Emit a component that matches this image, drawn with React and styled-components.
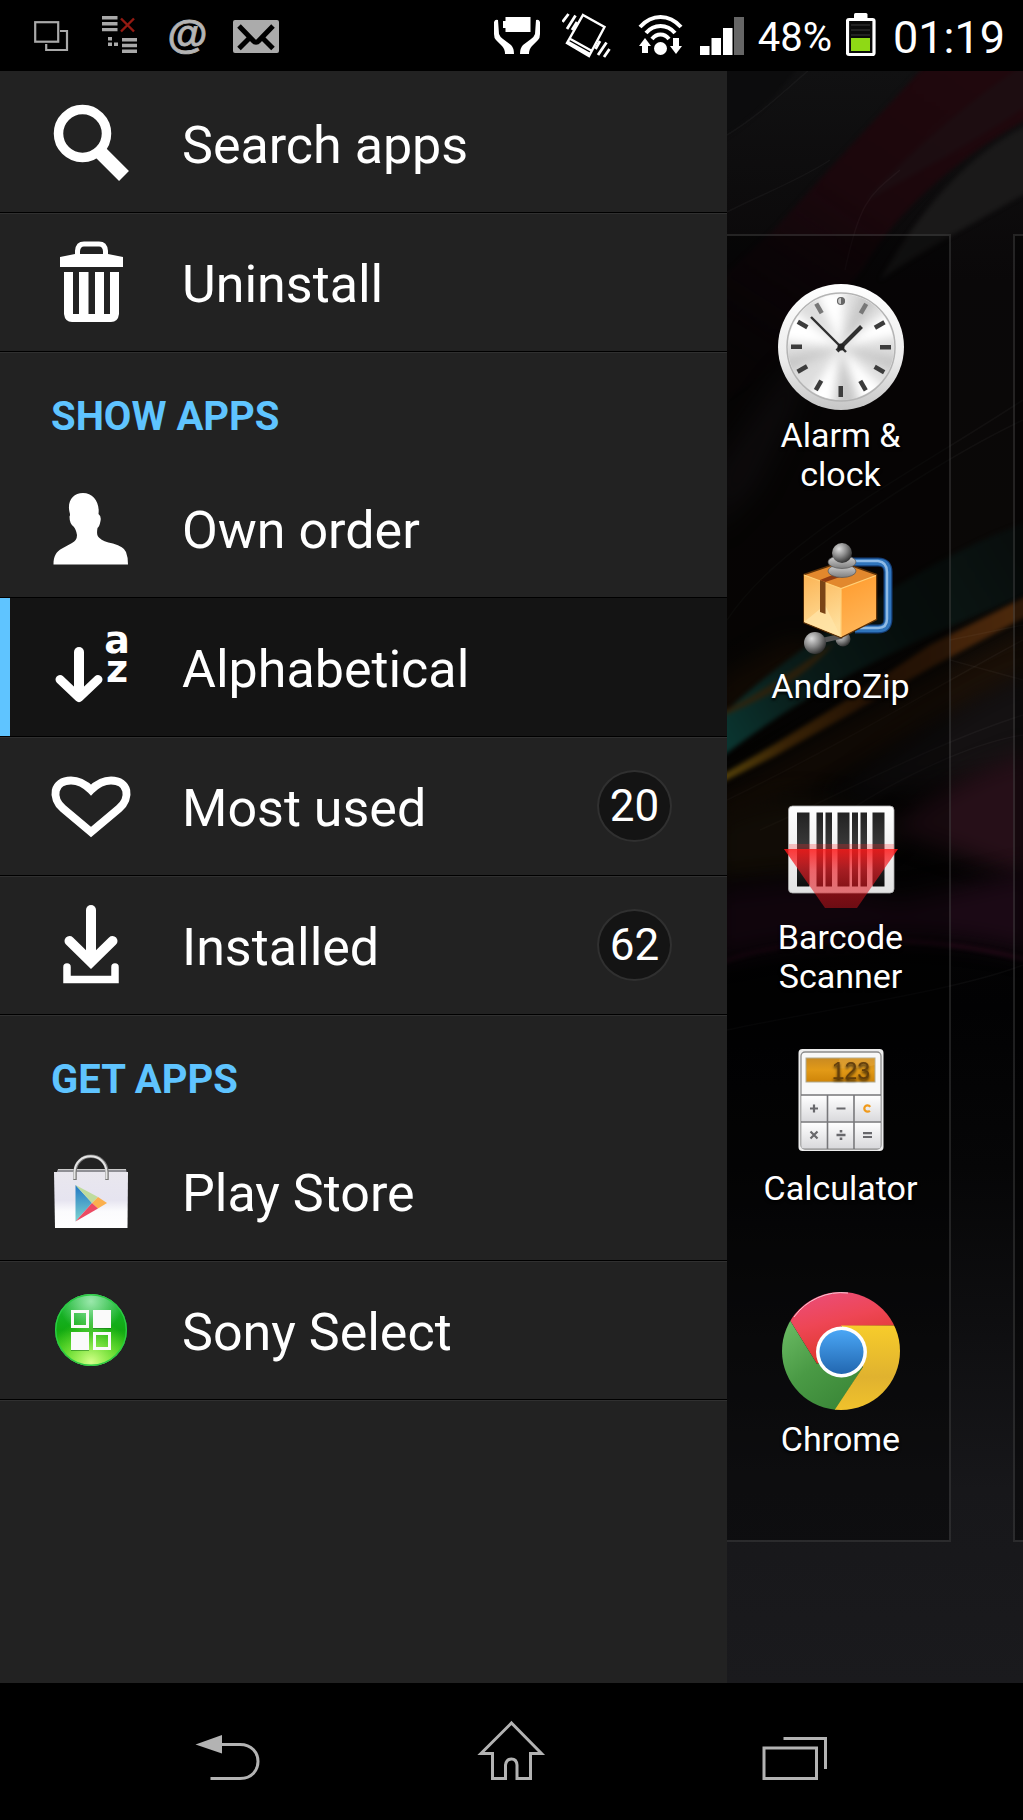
import React from "react";
import styled, { createGlobalStyle } from "styled-components";

const GlobalStyle = createGlobalStyle`
  *, *::before, *::after { box-sizing: border-box; }
  body {
    margin: 0;
    background: #000;
    color: #fff;
    font-family: Roboto, "Liberation Sans", sans-serif;
  }
  svg { display: block; }
`;

const Screen = styled.div`
  display: flex;
  flex-direction: column;
  min-height: 100vh;
`;

const StatusBar = styled.header`
  display: flex;
  align-items: center;
  justify-content: space-between;
  height: 71px;
  padding: 0 18px 0 28px;
  background: #000;
`;

const StatusGroup = styled.div`
  display: flex;
  align-items: center;
  gap: ${(p) => p.$gap}px;
`;

const BatteryLevel = styled.span`
  font-size: 40px;
  line-height: 71px;
  padding-top: 3px;
`;

const Clock = styled.time`
  font-size: 45px;
  line-height: 71px;
  padding-top: 3px;
`;

const Main = styled.main`
  flex: 1;
  display: grid;
  grid-template-columns: minmax(0, 727fr) minmax(0, 296fr);
`;

const Drawer = styled.nav`
  background: #222;
  padding-top: 3px;
`;

const RowList = styled.ul`
  list-style: none;
  margin: 0;
  padding: 0;
`;

const Row = styled.button`
  display: flex;
  align-items: center;
  gap: 51px;
  width: 100%;
  min-height: 139px;
  padding: 0 55px 0 51px;
  border: 0 solid #000;
  border-bottom-width: 1px;
  box-shadow: 0 1px 0 #303030;
  background: ${(p) =>
    p.$active ? "linear-gradient(to right, #5fc4ff 10px, #141414 10px)" : "transparent"};
  color: #fff;
  font-family: inherit;
  font-size: 52px;
  text-align: left;
`;

const RowLabel = styled.span`
  flex: 1;
  padding-top: 5px;
  line-height: 64px;
`;

const Count = styled.span`
  display: flex;
  align-items: center;
  justify-content: center;
  min-width: 75px;
  height: 72px;
  border: 2px solid #303030;
  border-radius: 50%;
  background: #141414;
  font-size: 44px;
  line-height: 48px;
`;

const SectionTitle = styled.h2`
  margin: 0;
  padding: 42px 51px 19px;
  color: #5fc4ff;
  font-size: 40px;
  font-weight: 700;
  line-height: 46px;
`;

const Desktop = styled.section`
  position: relative;
  display: flex;
  justify-content: space-between;
  padding: 163px 0 141px;
  overflow: hidden;
`;

const Wallpaper = styled.svg`
  position: absolute;
  inset: 0;
  width: 100%;
  height: 100%;
`;

const Pane = styled.div`
  position: relative;
  flex: ${(p) => (p.$peek ? "0 0 10px" : "0 1 224px")};
  padding: ${(p) => (p.$peek ? "0" : "48px 0 0 5px")};
  border: 2px solid rgba(255, 255, 255, 0.12);
  border-width: ${(p) => (p.$peek ? "2px 0 2px 2px" : "2px 2px 2px 0")};
  background: rgba(0, 0, 0, 0.4);
`;

const AppGrid = styled.ul`
  display: grid;
  grid-auto-rows: 251px;
  margin: 0;
  padding: 0;
  list-style: none;
`;

const AppButton = styled.button`
  display: flex;
  flex-direction: column;
  align-items: center;
  gap: 6px;
  width: 100%;
  padding: 0;
  border: 0;
  background: none;
  color: #fff;
  font-family: inherit;
  font-size: 34px;
  line-height: 39px;
  text-shadow: 0 2px 3px #000;
`;

const AppName = styled.span`
  max-width: 172px;
`;

const NavBar = styled.footer`
  display: flex;
  justify-content: space-between;
  height: 137px;
  padding: 0 192px;
  background: #000;
`;

const NavButton = styled.button`
  width: 72px;
  padding: 0;
  border: 0;
  background: none;
`;

/* ---------- status bar icons ---------- */

const StatusIcon = ({ x, w, children }) => (
  <svg width={w} height="71" viewBox={`${x} 0 ${w} 71`} aria-hidden="true">
    {children}
  </svg>
);

const WindowsIcon = () => (
  <StatusIcon x={28} w={46}>
    <g fill="none" stroke="#a9a9a9" strokeWidth="2.2">
      <rect x="35.2" y="22.2" width="23" height="19.5" />
      <path d="M60 31H67V50H46.200V44" />
    </g>
  </StatusIcon>
);

const SyncErrorIcon = () => (
  <StatusIcon x={96} w={46}>
    <g fill="#a9a9a9">
      <path d="M102 16h15.500v3.600h-15.500zM102 22h15.500v3.600h-15.500zM102 28h15.500v3.200h-15.500z" />
      <path d="M122 38h15v3.400h-15zM122 43.800h15v3.400h-15zM122 49.600h15v3.400h-15z" />
      <path d="M108 37h4v3.500h-4zM108 42.500h4v3.500h-4zM114 42.500h4v3.500h-4z" />
    </g>
    <path d="M121 18.500L134 31.500M134 18.500L121 31.500" stroke="#941a12" strokeWidth="2.400" />
  </StatusIcon>
);

const AtIcon = () => (
  <StatusIcon x={164} w={46}>
    <text x="187.500" y="48" textAnchor="middle" fontFamily="'Liberation Sans', sans-serif" fontWeight="700" fontSize="41" fill="#b4b4b4" stroke="#b4b4b4" strokeWidth="0.800">@</text>
  </StatusIcon>
);

const MailIcon = () => (
  <StatusIcon x={232} w={48}>
    <rect x="233" y="20" width="46" height="33" rx="2" fill="#ababab" />
    <path d="M239 26L253 40.500Q256 44 259 40.500L273 26M239 48.500L249 38.500M273 48.500L263 38.500" fill="none" stroke="#000" strokeWidth="5" />
  </StatusIcon>
);

const StaminaIcon = () => (
  <StatusIcon x={490} w={58}>
    <g fill="#fff">
      <path d="M505.500 17H530.500V32H505.500V28H503V21H505.500Z" />
      <path d="M494 22Q495 19 498 20L499 34Q500 37 503 39L511 45Q514 48 514 54H505Q505 49 502 46L496 40Q494 38 494 34Z" />
      <path d="M540 22Q539 19 536 20L535 34Q534 37 531 39L523 45Q520 48 520 54H529Q529 49 532 46L538 40Q540 38 540 34Z" />
    </g>
  </StatusIcon>
);

const VibrateIcon = () => (
  <StatusIcon x={562} w={52}>
    <g fill="none" stroke="#fff" strokeWidth="2.400">
      <path d="M583 15L604.500 27L589 56L567 43ZM569.500 38.500L592 51M567.500 41.500L590 54" />
      <path d="M562.500 22L568.500 14M567 29L575.500 15.500M572 30L577 22" strokeWidth="2.800" />
      <path d="M595.500 49L600 41M598 55L606.500 42.500M604 57L609.500 49" strokeWidth="2.800" />
    </g>
  </StatusIcon>
);

const WifiIcon = () => (
  <StatusIcon x={628} w={58}>
    <g fill="none" stroke="#fff" strokeWidth="4">
      <path d="M640 27Q649 17 660.500 17T681 27" />
      <path d="M646 33Q652 26 660.500 26T675 33" />
      <path d="M652 39Q655.500 34.500 660.500 34.500T669 39" />
    </g>
    <g fill="#fff">
      <circle cx="660.500" cy="48.500" r="6.500" />
      <path d="M645 38L651 46H648V53H642V46H639Z" />
      <path d="M676 54L670 46H673V38H679V46H682Z" />
    </g>
  </StatusIcon>
);

const SignalIcon = () => (
  <StatusIcon x={700} w={44}>
    <path d="M700 46h9.500v9h-9.500zM711.500 38h9.500v17h-9.500zM723 28h9.500v27h-9.500z" fill="#fff" />
    <path d="M734 17h10v38h-10z" fill="#666" />
  </StatusIcon>
);

const BatteryIcon = () => (
  <StatusIcon x={846} w={33}>
    <path d="M854 18V14.500Q854 13 855.500 13H866Q867.500 13 867.500 14.500V18Z" fill="#fff" />
    <rect x="847.500" y="19.500" width="26.500" height="35" rx="1.500" fill="#0a0a0a" stroke="#fff" strokeWidth="3.200" />
    <path d="M851 25h19M851 30h19M851 35h19" stroke="#222" strokeWidth="2" />
    <rect x="851" y="38" width="19" height="13" fill="#8fd915" />
  </StatusIcon>
);

/* ---------- drawer icons, each on an 80 x 80 tile ---------- */

const DrawerIcon = ({ y, children }) => (
  <svg width="80" height="80" viewBox={`51 ${y} 80 80`} overflow="visible" aria-hidden="true">
    {children}
  </svg>
);

const SearchIcon = () => (
  <DrawerIcon y={103}>
    <circle cx="82.500" cy="133.500" r="24" fill="none" stroke="#fff" strokeWidth="9.500" />
    <path d="M100 152L124 176" stroke="#fff" strokeWidth="14" />
  </DrawerIcon>
);

const TrashIcon = () => (
  <DrawerIcon y={242}>
    <path d="M77.500 256V251Q78 244 84 244H99Q105 244 105.500 251V256" fill="none" stroke="#fff" strokeWidth="5" />
    <path d="M60 257L75 254H108L123 257V267H60Z" fill="#fff" />
    <path fillRule="evenodd" d="M64 272H119V314Q118 322 111 322H72Q65 322 64 314ZM73 272V314H79V272ZM88.500 272V314H95V272ZM104 272V314H110V272Z" fill="#fff" />
  </DrawerIcon>
);

const PersonIcon = () => (
  <DrawerIcon y={488}>
    <path fill="#fff" d="M53.500 564.500C53.500 556 56 552 62 548.500L72 543Q77 540.500 77 535Q76 529 73.500 526.500Q69.500 523.500 69.500 516.500Q70.500 515 69.500 512C67 501 73 493 83 493S100 502 98.500 514Q101.500 516 100.500 521Q99.500 526.500 97.500 528Q96 536 99.500 538Q103 541.500 113 543.500Q124 546.500 126 552Q128 557 128 564.500Z" />
  </DrawerIcon>
);

const AlphabetIcon = () => (
  <DrawerIcon y={626}>
    <path d="M79 651V692" stroke="#fff" strokeWidth="10" strokeLinecap="round" />
    <path d="M60 678.500L79 696.500L98 678.500" fill="none" stroke="#fff" strokeWidth="9" strokeLinecap="round" strokeLinejoin="round" />
    <g fill="#fff" fontFamily="'DejaVu Sans', sans-serif" fontWeight="700" fontSize="38" textAnchor="middle">
      <text x="117" y="652">a</text>
      <text x="117" y="681">z</text>
    </g>
  </DrawerIcon>
);

const HeartIcon = () => (
  <DrawerIcon y={765}>
    <path d="M91 831L63 807.500C51 797 53 779.500 71 779.500C80 779.500 86 784 91 789C96 784 102 779.500 111 779.500C129 779.500 131 797 119 807.500Z" fill="none" stroke="#fff" strokeWidth="8" />
  </DrawerIcon>
);

const InstalledIcon = () => (
  <DrawerIcon y={905}>
    <g fill="none" stroke="#fff" strokeLinecap="round">
      <path d="M91 910V956" strokeWidth="10" />
      <path d="M69.500 941L91 962L112.500 941" strokeWidth="10" />
      <path d="M67 967V979.500H115V967" strokeWidth="7.500" />
    </g>
  </DrawerIcon>
);

const PlayStoreIcon = () => (
  <DrawerIcon y={1151}>
    <defs>
      <linearGradient id="bag" x1="0" y1="0" x2="0" y2="1">
        <stop offset="0" stopColor="#e9e7ee" />
        <stop offset="0.500" stopColor="#e6e4f0" />
        <stop offset="0.700" stopColor="#fbfbfd" />
        <stop offset="1" stopColor="#fff" />
      </linearGradient>
      <linearGradient id="playBlue" x1="0" y1="0" x2="0" y2="1">
        <stop offset="0" stopColor="#2277c4" />
        <stop offset="1" stopColor="#7dd4d0" />
      </linearGradient>
    </defs>
    <path d="M58 1169H126L127 1174H56Z" fill="#8f8f95" />
    <path d="M58 1169.500H126" stroke="#ccc" strokeWidth="1" />
    <path d="M54 1172H128L127.500 1228H55Z" fill="url(#bag)" />
    <path d="M75 1180V1172C76 1151 106 1151 107 1172V1180" fill="none" stroke="#777" strokeWidth="3.500" />
    <path d="M74.500 1179V1172C75.500 1151 105.500 1151 106.500 1172V1179" fill="none" stroke="#e4e4e4" strokeWidth="2" />
    <path d="M75.500 1185L92 1203L75.500 1221.500Z" fill="url(#playBlue)" />
    <path d="M75.500 1185L98 1197L92 1203Z" fill="#bfdc9d" />
    <path d="M98 1197L107 1203L98 1208.500L92 1203Z" fill="#fbb04e" />
    <path d="M75.500 1221.500L92 1203L98 1208.500Z" fill="#ec4a62" />
  </DrawerIcon>
);

const SonySelectIcon = () => (
  <DrawerIcon y={1290}>
    <defs>
      <linearGradient id="sonyBase" x1="0" y1="0" x2="0" y2="1">
        <stop offset="0" stopColor="#19b93c" />
        <stop offset="0.500" stopColor="#12aa12" />
        <stop offset="1" stopColor="#54d923" />
      </linearGradient>
      <radialGradient id="sonyTop" cx="0.500" cy="0.100" r="0.450">
        <stop offset="0" stopColor="#9be8ac" />
        <stop offset="1" stopColor="#9be8ac" stopOpacity="0" />
      </radialGradient>
      <radialGradient id="sonyLow" cx="0.500" cy="0.950" r="0.600">
        <stop offset="0" stopColor="#d5ff8c" />
        <stop offset="1" stopColor="#8ff52d" stopOpacity="0" />
      </radialGradient>
    </defs>
    <circle cx="91" cy="1330" r="36" fill="url(#sonyBase)" />
    <circle cx="91" cy="1330" r="36" fill="url(#sonyTop)" />
    <circle cx="91" cy="1330" r="36" fill="url(#sonyLow)" />
    <circle cx="91" cy="1330" r="35.300" fill="none" stroke="#2bcb45" strokeWidth="1.400" />
    <path d="M93 1311h18v18h-18zM71 1333h18v18h-18z" fill="#0b6b12" opacity="0.500" />
    <path d="M93 1310h18v18h-18zM71 1332h18v18h-18z" fill="#fafafa" />
    <g fill="none" stroke="#fafafa" strokeWidth="3">
      <rect x="72.500" y="1311.500" width="15" height="15" />
      <rect x="94.500" y="1333.500" width="15" height="15" />
    </g>
  </DrawerIcon>
);

/* ---------- home screen app icons, each on a 126 x 126 tile ---------- */

const AppIcon = ({ y, children }) => (
  <svg width="126" height="126" viewBox={`778 ${y} 126 126`} aria-hidden="true">
    {children}
  </svg>
);

const TICKS = [30, 60, 90, 120, 150, 180, 210, 240, 270, 300, 330];

const AlarmClockIcon = () => (
  <AppIcon y={284}>
    <defs>
      <linearGradient id="rim" x1="0" y1="0" x2="0" y2="1">
        <stop offset="0" stopColor="#fff" />
        <stop offset="0.600" stopColor="#ececec" />
        <stop offset="1" stopColor="#c6c6c6" />
      </linearGradient>
      <clipPath id="face"><circle cx="841" cy="347" r="53" /></clipPath>
      <filter id="soft" x="-30%" y="-30%" width="160%" height="160%" colorInterpolationFilters="sRGB"><feGaussianBlur stdDeviation="5" /></filter>
    </defs>
    <circle cx="841" cy="347" r="63" fill="url(#rim)" />
    <g clipPath="url(#face)">
      <rect x="788" y="294" width="106" height="106" fill="#dedede" />
      <g filter="url(#soft)">
        <path d="M841 347L780 300V340ZM841 347L902 300V335ZM841 347L815 290H845ZM841 347L800 410L830 415ZM841 347L895 400L865 412Z" fill="#fff" />
        <path d="M841 347L780 358V375ZM841 347L902 358V375ZM841 347L838 410H858ZM841 347L862 290L880 298Z" fill="#c6c6c6" />
      </g>
    </g>
    <circle cx="841" cy="347" r="54" fill="none" stroke="#b4b4b4" strokeWidth="1.500" />
    {TICKS.map((a) => (
      <rect key={a} x="839" y="297" width="4.500" height="11" fill={a < 40 || a > 320 ? "#777" : "#3c3c3c"} transform={`rotate(${a} 841 347)`} />
    ))}
    <circle cx="841" cy="301" r="3.500" fill="#ccc" stroke="#666" strokeWidth="1.200" />
    <path d="M841 297.500A3.500 3.500 0 0 1 841 304.500Z" fill="#666" />
    <path d="M846 352L811 317" stroke="#303030" strokeWidth="2.400" />
    <path d="M837 351L861.500 326.500" stroke="#303030" strokeWidth="4" />
    <circle cx="841" cy="347" r="3.500" fill="#222" />
  </AppIcon>
);

const AndroZipIcon = () => (
  <AppIcon y={535}>
    <defs>
      <radialGradient id="ball" cx="0.350" cy="0.300" r="0.750">
        <stop offset="0" stopColor="#dcdcdc" />
        <stop offset="0.500" stopColor="#8a8a8a" />
        <stop offset="1" stopColor="#2b2b2b" />
      </radialGradient>
      <linearGradient id="discs" x1="0" y1="0" x2="0" y2="1">
        <stop offset="0" stopColor="#d8d8d8" />
        <stop offset="1" stopColor="#7e7e7e" />
      </linearGradient>
      <linearGradient id="boxLeft" x1="0" y1="0" x2="0.300" y2="1">
        <stop offset="0" stopColor="#fbb455" />
        <stop offset="1" stopColor="#ffdf9c" />
      </linearGradient>
      <linearGradient id="boxRight" x1="0" y1="0" x2="0.300" y2="1">
        <stop offset="0" stopColor="#ff9a2c" />
        <stop offset="1" stopColor="#ffb658" />
      </linearGradient>
    </defs>
    <path d="M850 562H878Q888 562 888 572V619Q888 629 878 629H855" fill="none" stroke="#153f78" strokeWidth="9" />
    <path d="M850 562H878Q888 562 888 572V619Q888 629 878 629H855" fill="none" stroke="#2f74bb" strokeWidth="6.500" />
    <path d="M850 561H878Q887 562 887 572V619Q887 628 878 628H860" fill="none" stroke="#8fbbe6" strokeWidth="2.500" />
    <circle cx="843" cy="639" r="7.500" fill="url(#ball)" />
    <path d="M820 641L842 636" stroke="#555" strokeWidth="5" />
    <circle cx="815" cy="643" r="11" fill="url(#ball)" />
    <path d="M804 574.500L841 562L876.500 574.500V619.500L841 637.500L804 622.500Z" fill="#e2882d" stroke="#5d3208" strokeWidth="1.500" strokeLinejoin="round" />
    <path d="M804 575L841 588.500V637L804 622Z" fill="url(#boxLeft)" />
    <path d="M841 588.500L876 575.500V619L841 637Z" fill="url(#boxRight)" />
    <path d="M804 622L825 605L841 637Z" fill="#ffe5aa" opacity="0.700" />
    <path d="M804 575L841 588.500L876 575.500M841 588.500V637" fill="none" stroke="#ffd078" strokeWidth="1.200" />
    <path d="M820 580L825.500 582V614L820 612Z" fill="#7a4416" />
    <path d="M820 580L835 574L840 577L825.500 582Z" fill="#913c12" />
    <ellipse cx="842" cy="571" rx="14" ry="6.500" fill="url(#discs)" stroke="#555" strokeWidth="0.700" />
    <ellipse cx="842" cy="562" rx="14" ry="6.500" fill="url(#discs)" stroke="#555" strokeWidth="0.700" />
    <circle cx="842" cy="553" r="10" fill="url(#ball)" />
  </AppIcon>
);

const BarcodeIcon = () => (
  <AppIcon y={786}>
    <defs>
      <linearGradient id="card" x1="0" y1="0" x2="0" y2="1">
        <stop offset="0" stopColor="#fff" />
        <stop offset="1" stopColor="#e2e2e2" />
      </linearGradient>
      <linearGradient id="bars" x1="0" y1="0" x2="0" y2="1">
        <stop offset="0" stopColor="#222" />
        <stop offset="0.450" stopColor="#393939" />
        <stop offset="1" stopColor="#0c0c0c" />
      </linearGradient>
      <linearGradient id="beam" x1="0" y1="0" x2="0" y2="1">
        <stop offset="0" stopColor="#ff1717" stopOpacity="0.850" />
        <stop offset="0.350" stopColor="#f01c24" stopOpacity="0.650" />
        <stop offset="1" stopColor="#d3151b" stopOpacity="0.480" />
      </linearGradient>
    </defs>
    <rect x="788.500" y="806" width="105.500" height="87" rx="4" fill="url(#card)" stroke="#aaa" strokeWidth="0.800" />
    <path d="M797 812.500h12.500v74h-12.500zM816.500 812.500h6.500v74h-6.500zM825.500 812.500h6.500v74h-6.500zM837.500 812.500h12v74h-12zM852 812.500h6v74h-6zM860.500 812.500h6.500v74h-6.500zM872.500 812.500h12v74h-12z" fill="url(#bars)" />
    <rect x="789" y="844" width="105" height="5" fill="#ff2020" opacity="0.250" />
    <path d="M784 849H898L857 908H825Z" fill="url(#beam)" />
  </AppIcon>
);

const CalculatorIcon = () => (
  <AppIcon y={1037}>
    <defs>
      <linearGradient id="calcKey" x1="0" y1="0" x2="0" y2="1">
        <stop offset="0" stopColor="#fff" />
        <stop offset="1" stopColor="#d9d9dc" />
      </linearGradient>
      <linearGradient id="lcd" x1="0" y1="0" x2="0" y2="1">
        <stop offset="0" stopColor="#c98a22" />
        <stop offset="0.500" stopColor="#e29a17" />
        <stop offset="1" stopColor="#cf8509" />
      </linearGradient>
    </defs>
    <rect x="798.500" y="1049" width="85" height="102" rx="4" fill="#ececec" />
    <rect x="801" y="1052" width="80" height="97" rx="4" fill="#f8f8f8" stroke="#8b8b8b" strokeWidth="1.300" />
    <rect x="806" y="1058" width="69" height="24" fill="url(#lcd)" stroke="#b0a98f" strokeWidth="1" />
    <path d="M840 1058L875 1058V1065Q855 1070 836 1068Z" fill="#edb44d" opacity="0.350" />
    <text x="870" y="1078.500" textAnchor="end" fontFamily="'Liberation Sans Narrow', 'Liberation Sans', sans-serif" fontSize="23" fill="#4f3009" opacity="0.850">123</text>
    {[0, 1].map((r) => [0, 1, 2].map((c) => (
      <rect key={`${r}${c}`} x={801.5 + c * 26.7} y={1095.5 + r * 26.7} width="25.500" height="26" fill="url(#calcKey)" />
    )))}
    <path d="M801 1095H881M801 1122H881M827.500 1095V1149M854 1095V1149" stroke="#77777a" strokeWidth="1.600" />
    <g stroke="#68686c" strokeWidth="2.200">
      <path d="M810 1108.500H818M814 1104.500V1112.500M836.500 1108.500H845.500" />
      <path d="M810.500 1131.500L817.500 1138.500M817.500 1131.500L810.500 1138.500" />
      <path d="M836.500 1135H845.500M841 1130V1132.600M841 1137.400V1140" strokeWidth="2.600" />
      <path d="M863 1133.200H872M863 1137H872" />
    </g>
    <circle cx="867.500" cy="1108.500" r="3.200" fill="none" stroke="#f09a1c" strokeWidth="2.200" strokeDasharray="15.500 4.600" strokeDashoffset="-2.300" />
  </AppIcon>
);

const ChromeIcon = () => (
  <AppIcon y={1288}>
    <defs>
      <linearGradient id="chRed" x1="0" y1="0" x2="0.400" y2="1">
        <stop offset="0" stopColor="#ea4f83" />
        <stop offset="0.500" stopColor="#ee4655" />
        <stop offset="1" stopColor="#dc3527" />
      </linearGradient>
      <linearGradient id="chGreen" x1="0" y1="0" x2="0.600" y2="1">
        <stop offset="0" stopColor="#74c46c" />
        <stop offset="0.600" stopColor="#4a9a45" />
        <stop offset="1" stopColor="#3c8939" />
      </linearGradient>
      <linearGradient id="chYellow" x1="0" y1="0" x2="0" y2="1">
        <stop offset="0" stopColor="#f7cc2b" />
        <stop offset="0.600" stopColor="#e0b22f" />
        <stop offset="1" stopColor="#f1c22c" />
      </linearGradient>
      <linearGradient id="chBlue" x1="0" y1="0" x2="0" y2="1">
        <stop offset="0" stopColor="#4aa6f5" />
        <stop offset="1" stopColor="#2267b0" />
      </linearGradient>
      <clipPath id="chDisc"><circle cx="841" cy="1351" r="59" /></clipPath>
    </defs>
    <g clipPath="url(#chDisc)">
      <path d="M781 1306V1290H902V1325.500L841 1326V1352L817 1364Z" fill="url(#chRed)" />
      <path d="M781 1306L817 1364L841 1352L863 1367L835 1411H781Z" fill="url(#chGreen)" />
      <path d="M902 1325.500V1411H834L863 1367L841 1325.500Z" fill="url(#chYellow)" />
    </g>
    <path d="M794 1317A58.500 58.500 0 0 1 848 1293" fill="none" stroke="#f5c8d4" strokeWidth="1" />
    <circle cx="841.500" cy="1352" r="25.500" fill="#fff" />
    <circle cx="841.500" cy="1352" r="22" fill="url(#chBlue)" />
  </AppIcon>
);

/* ---------- wallpaper ---------- */

const WallpaperArt = () => (
  <Wallpaper viewBox="727 71 296 1612" preserveAspectRatio="none" aria-hidden="true">
    <defs>
      <linearGradient id="base" x1="0" y1="0" x2="0" y2="1">
        <stop offset="0" stopColor="#111112" />
        <stop offset="0.130" stopColor="#0a0809" />
        <stop offset="0.350" stopColor="#0a0806" />
        <stop offset="0.580" stopColor="#020203" />
        <stop offset="0.680" stopColor="#060607" />
        <stop offset="0.880" stopColor="#17171a" />
        <stop offset="1" stopColor="#1a1a1d" />
      </linearGradient>
      <linearGradient id="redBand" gradientUnits="userSpaceOnUse" x1="960" y1="71" x2="770" y2="370">
        <stop offset="0" stopColor="#20080d" />
        <stop offset="0.450" stopColor="#1b070c" />
        <stop offset="1" stopColor="#12060b" stopOpacity="0.300" />
      </linearGradient>
      <linearGradient id="teal" gradientUnits="userSpaceOnUse" x1="727" y1="740" x2="1023" y2="560">
        <stop offset="0" stopColor="#125850" />
        <stop offset="0.250" stopColor="#11302b" />
        <stop offset="0.600" stopColor="#0b1815" />
        <stop offset="1" stopColor="#090e0d" />
      </linearGradient>
      <linearGradient id="orange" gradientUnits="userSpaceOnUse" x1="727" y1="0" x2="1023" y2="0">
        <stop offset="0" stopColor="#8a6a10" />
        <stop offset="0.200" stopColor="#5f3a0a" />
        <stop offset="0.500" stopColor="#3a1d08" />
        <stop offset="1" stopColor="#4c290c" />
      </linearGradient>
      <filter id="haze" filterUnits="userSpaceOnUse" x="600" y="0" width="600" height="1800" colorInterpolationFilters="sRGB"><feGaussianBlur stdDeviation="11" /></filter>
      <filter id="edge" filterUnits="userSpaceOnUse" x="600" y="0" width="600" height="1800" colorInterpolationFilters="sRGB"><feGaussianBlur stdDeviation="2" /></filter>
    </defs>
    <rect x="727" y="71" width="296" height="1612" fill="url(#base)" />
    <g filter="url(#edge)">
      <path d="M935 55L847 150L770 234L715 284V405C775 370 825 315 862 270C890 220 950 160 1035 115V55Z" fill="url(#redBand)" />
      <path d="M1035 58C980 90 900 160 865 202C920 170 980 140 1035 100Z" fill="#1c1014" opacity="0.700" />
      <path d="M1035 122C970 150 920 210 880 280C915 255 970 225 1035 188Z" fill="#1a1919" />
      <path d="M715 143C760 115 780 90 805 60H715Z" fill="#0c0c0d" />
    </g>
    <path d="M715 470C760 410 780 370 815 350L790 420L755 490L715 530Z" fill="#151113" filter="url(#haze)" />
    <path d="M715 680L790 640L850 650L715 740Z" fill="#1c1006" filter="url(#haze)" />
    <g filter="url(#edge)">
      <path d="M715 762C785 708 870 655 1035 592V520C950 545 800 640 715 722Z" fill="url(#teal)" />
      <path d="M715 714C760 695 800 665 835 642C805 680 760 700 715 720Z" fill="#5d360c" opacity="0.700" />
    </g>
    <path d="M715 795C800 750 900 690 1035 625V680C920 730 820 790 715 830Z" fill="#1b1007" filter="url(#haze)" />
    <path d="M715 779L775 744L850 698L930 645L1035 592V612L930 668L850 714L775 756L715 786Z" fill="url(#orange)" filter="url(#edge)" />
    <path d="M715 820C800 780 850 800 900 830L850 870L715 880Z" fill="#1d150a" filter="url(#haze)" />
    <path d="M1035 672C960 700 900 750 830 800L1035 770Z" fill="#141112" filter="url(#haze)" />
    <path d="M1035 750C960 775 920 800 890 830L1035 880Z" fill="#260f18" filter="url(#haze)" />
    <path d="M715 890L800 880L900 900L1035 870V955C930 925 820 935 715 960Z" fill="#1b0915" filter="url(#haze)" />
    <g fill="none" stroke="#fff" strokeOpacity="0.035" strokeWidth="1.500">
      <path d="M727 135C760 115 785 90 808 71M727 212C760 195 800 180 830 160M845 270C860 200 870 195 900 170" />
      <path d="M727 620C780 540 900 480 1023 400M800 560C880 500 960 450 1023 420" />
      <path d="M1023 640C930 690 850 740 727 800M1023 715C930 745 850 790 760 830M1023 735C960 745 880 790 850 810" />
      <path d="M950 640L1023 625M950 660L1023 680M727 1030C820 1010 960 990 1023 965" />
    </g>
    <path d="M715 965C800 930 940 935 1035 962" fill="none" stroke="#2d0a1c" strokeWidth="2.500" filter="url(#edge)" />
  </Wallpaper>
);

/* ---------- navigation icons ---------- */

const NavIcon = ({ x, children }) => (
  <svg width="72" height="137" viewBox={`${x} 1683 72 137`} fill="none" stroke="#b3b3b3" strokeWidth="3" aria-hidden="true">
    {children}
  </svg>
);

const ACTIONS = [
  { label: "Search apps", Icon: SearchIcon },
  { label: "Uninstall", Icon: TrashIcon },
];

const SECTIONS = [
  {
    title: "SHOW APPS",
    rows: [
      { label: "Own order", Icon: PersonIcon },
      { label: "Alphabetical", Icon: AlphabetIcon, active: true },
      { label: "Most used", Icon: HeartIcon, count: 20 },
      { label: "Installed", Icon: InstalledIcon, count: 62 },
    ],
  },
  {
    title: "GET APPS",
    rows: [
      { label: "Play Store", Icon: PlayStoreIcon },
      { label: "Sony Select", Icon: SonySelectIcon },
    ],
  },
];

const APPS = [
  { name: "Alarm & clock", Icon: AlarmClockIcon },
  { name: "AndroZip", Icon: AndroZipIcon },
  { name: "Barcode Scanner", Icon: BarcodeIcon },
  { name: "Calculator", Icon: CalculatorIcon },
  { name: "Chrome", Icon: ChromeIcon },
];

const Rows = ({ rows }) => (
  <RowList>
    {rows.map(({ label, Icon, active, count }) => (
      <li key={label}>
        <Row type="button" $active={active} aria-current={active ? "true" : undefined}>
          <Icon />
          <RowLabel>{label}</RowLabel>
          {count !== undefined && <Count>{count}</Count>}
        </Row>
      </li>
    ))}
  </RowList>
);

export default function App() {
  return (
    <Screen>
      <GlobalStyle />
      <StatusBar>
        <StatusGroup $gap={22}>
          <WindowsIcon />
          <SyncErrorIcon />
          <AtIcon />
          <MailIcon />
        </StatusGroup>
        <StatusGroup $gap={14}>
          <StaminaIcon />
          <VibrateIcon />
          <WifiIcon />
          <SignalIcon />
          <BatteryLevel>48%</BatteryLevel>
          <BatteryIcon />
          <Clock>01:19</Clock>
        </StatusGroup>
      </StatusBar>
      <Main>
        <Drawer>
          <Rows rows={ACTIONS} />
          {SECTIONS.map(({ title, rows }) => (
            <React.Fragment key={title}>
              <SectionTitle>{title}</SectionTitle>
              <Rows rows={rows} />
            </React.Fragment>
          ))}
        </Drawer>
        <Desktop>
          <WallpaperArt />
          <Pane>
            <AppGrid>
              {APPS.map(({ name, Icon }) => (
                <li key={name}>
                  <AppButton type="button">
                    <Icon />
                    <AppName>{name}</AppName>
                  </AppButton>
                </li>
              ))}
            </AppGrid>
          </Pane>
          <Pane $peek />
        </Desktop>
      </Main>
      <NavBar>
        <NavButton type="button" aria-label="Back">
          <NavIcon x={192}>
            <path d="M220 1744.500H240C264 1744.500 264 1778.500 240 1778.500H210.500" />
            <path d="M195.500 1744.500L222 1735V1753.500Z" fill="#b3b3b3" stroke="none" />
          </NavIcon>
        </NavButton>
        <NavButton type="button" aria-label="Home">
          <NavIcon x={476}>
            <path d="M511.500 1723L541.500 1753.500H530.500V1778.500H517V1765Q516.500 1759 511.500 1759T505.500 1765V1778.500H492.500V1753.500H481Z" />
          </NavIcon>
        </NavButton>
        <NavButton type="button" aria-label="Recent apps">
          <NavIcon x={760}>
            <rect x="765" y="1748" width="52.500" height="30.500" />
            <path d="M784.500 1738.500H826.500V1769" />
          </NavIcon>
        </NavButton>
      </NavBar>
    </Screen>
  );
}
